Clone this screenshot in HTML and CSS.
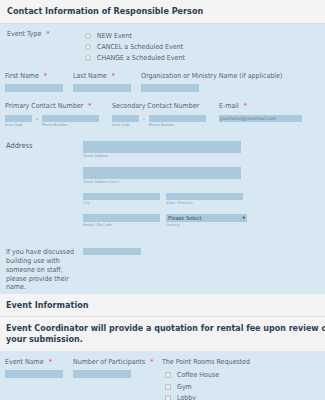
FILE: index.html
```html
<!DOCTYPE html>
<html>
<head>
<meta charset="utf-8">
<link rel="stylesheet" href="styles.css">
</head>
<body>
<div class="page">
  <div class="sec-head"><h2 class="title">Contact Information of Responsible Person</h2></div>
  <div class="blue sec1">
    <div class="row-type">
      <div class="lbl lbl-type">Event Type<span class="req">*</span></div>
      <div class="radios">
        <div class="opt"><span class="radio"></span>NEW Event</div>
        <div class="opt"><span class="radio"></span>CANCEL a Scheduled Event</div>
        <div class="opt"><span class="radio"></span>CHANGE a Scheduled Event</div>
      </div>
    </div>
    <div class="row-names">
      <div class="field"><div class="lbl">First Name<span class="req">*</span></div><div class="inp inp-name"></div></div>
      <div class="field"><div class="lbl">Last Name<span class="req">*</span></div><div class="inp inp-name"></div></div>
      <div class="field"><div class="lbl">Organization or Ministry Name (if applicable)</div><div class="inp inp-name"></div></div>
    </div>
    <div class="row-contact">
      <div class="field f-phone">
        <div class="lbl">Primary Contact Number<span class="req">*</span></div>
        <div class="phone">
          <div class="subf"><div class="inp inp-area"></div><div class="sub">Area Code</div></div>
          <span class="dash">-</span>
          <div class="subf"><div class="inp inp-num"></div><div class="sub">Phone Number</div></div>
        </div>
      </div>
      <div class="field f-phone">
        <div class="lbl">Secondary Contact Number</div>
        <div class="phone">
          <div class="subf"><div class="inp inp-area"></div><div class="sub">Area Code</div></div>
          <span class="dash">-</span>
          <div class="subf"><div class="inp inp-num"></div><div class="sub">Phone Number</div></div>
        </div>
      </div>
      <div class="field f-email">
        <div class="lbl">E-mail<span class="req">*</span></div>
        <div class="inp inp-email"><span class="ph">yourname@youremail.com</span></div>
      </div>
    </div>
    <div class="row-addr">
      <div class="lbl lbl-addr">Address</div>
      <div class="addr-fields">
        <div class="afield"><div class="inp inp-street"></div><div class="sub">Street Address</div></div>
        <div class="afield"><div class="inp inp-street"></div><div class="sub">Street Address Line 2</div></div>
        <div class="apair">
          <div class="afield"><div class="inp inp-half"></div><div class="sub">City</div></div>
          <div class="afield"><div class="inp inp-half"></div><div class="sub">State / Province</div></div>
        </div>
        <div class="apair">
          <div class="afield"><div class="inp inp-half"></div><div class="sub">Postal / Zip Code</div></div>
          <div class="afield"><div class="inp inp-select"><span class="sel-text">Please Select</span><span class="sel-arrow">&#9660;</span></div><div class="sub">Country</div></div>
        </div>
      </div>
    </div>
    <div class="row-staff">
      <div class="lbl lbl-staff">If you have discussed building use with someone on staff, please provide their name.</div>
      <div class="inp inp-staff"></div>
    </div>
  </div>
  <div class="gray">
    <div class="sub-head"><h3 class="title2">Event Information</h3></div>
    <p class="notice">Event Coordinator will provide a quotation for rental fee upon review of your submission.</p>
  </div>
  <div class="blue sec2">
    <div class="field"><div class="lbl">Event Name<span class="req">*</span></div><div class="inp inp-name"></div></div>
    <div class="field"><div class="lbl">Number of Participants<span class="req">*</span></div><div class="inp inp-name"></div></div>
    <div class="field f-rooms">
      <div class="lbl">The Point Rooms Requested</div>
      <div class="checks">
        <div class="opt opt-c"><span class="check"></span>Coffee House</div>
        <div class="opt opt-c"><span class="check"></span>Gym</div>
        <div class="opt opt-c"><span class="check"></span>Lobby</div>
      </div>
    </div>
  </div>
</div>
</body>
</html>
```
FILE: styles.css
```css
html, body {
  margin: 0;
  padding: 0;
  overflow: hidden;
  background: #d8e8f2;
}
.page {
  width: 325px;
  height: 400px;
  overflow: hidden;
  font-family: "DejaVu Sans Condensed", "DejaVu Sans", sans-serif;
  font-stretch: condensed;
  color: #56636f;
}
.sec-head {
  height: 23px;
  background: #f4f4f4;
  border-bottom: 1px solid #d9dde0;
}
.title {
  margin: 0;
  padding-left: 7px;
  font-size: 9px;
  line-height: 23px;
  font-weight: bold;
  color: #2d3f52;
}
.blue {
  background: #d8e8f2;
}
.sec1 {
  padding: 6px 0 2px 0;
}
.lbl {
  font-size: 7px;
  line-height: 10px;
  white-space: nowrap;
  color: #56636f;
}
.req {
  color: #ee3a3a;
  margin-left: 5px;
}
.row-type {
  display: flex;
}
.lbl-type {
  width: 78px;
  padding-left: 7px;
  line-height: 9px;
}
.radios {
  display: flex;
  flex-direction: column;
}
.opt {
  display: flex;
  align-items: center;
  height: 11.3px;
  font-size: 7px;
  color: #56636f;
}
.radio {
  width: 4px;
  height: 4px;
  border-radius: 50%;
  border: 0.7px solid #b8c0c6;
  background: #e6eaed;
  margin-right: 6px;
}
.row-names {
  display: flex;
  gap: 10px;
  padding-left: 5px;
  margin-top: 6.7px;
}
.field {
  width: 58px;
}
.inp {
  background: #abc9dc;
}
.inp-name {
  margin-top: 3.3px;
  height: 8px;
  width: 58px;
}
.row-contact {
  display: flex;
  padding-left: 5px;
  margin-top: 9.5px;
}
.f-phone {
  width: 94px;
  margin-right: 13px;
}
.f-email {
  width: 83px;
}
.phone {
  display: flex;
  margin-top: 3.5px;
}
.dash {
  width: 10px;
  text-align: center;
  font-size: 7px;
  line-height: 8px;
  color: #56636f;
}
.inp-area {
  width: 27px;
  height: 7.5px;
}
.inp-num {
  width: 57px;
  height: 7.5px;
}
.inp-email {
  margin-top: 3.5px;
  width: 83px;
  height: 7.5px;
  display: flex;
  align-items: center;
}
.ph {
  font-size: 4.6px;
  color: #6b7780;
  padding-left: 1px;
  white-space: nowrap;
}
.sub {
  font-size: 3.8px;
  line-height: 5px;
  color: #8e9ba5;
  white-space: nowrap;
}
.row-addr {
  display: flex;
  margin-top: 13.5px;
}
.lbl-addr {
  width: 77px;
  padding-left: 6px;
  font-size: 7.4px;
  color: #4d5b68;
}
.addr-fields {
  display: flex;
  flex-direction: column;
}
.afield {
  margin-bottom: 8.7px;
}
.inp-street {
  width: 158px;
  height: 12.3px;
}
.apair {
  display: flex;
  gap: 6px;
}
.inp-half {
  width: 77px;
  height: 7.6px;
}
.inp-select {
  width: 81px;
  height: 7.6px;
  display: flex;
  align-items: center;
  justify-content: space-between;
}
.sel-text {
  font-size: 5.6px;
  color: #3a4652;
  padding-left: 2px;
}
.sel-arrow {
  font-size: 3.6px;
  color: #3a4652;
  padding-right: 2px;
}
.row-staff {
  display: flex;
  margin-top: 12.8px;
}
.lbl-staff {
  width: 72px;
  padding: 0 5px 0 6px;
  white-space: normal;
  line-height: 8.8px;
}
.inp-staff {
  width: 58px;
  height: 7px;
  margin-top: 0;
}
.gray {
  background: #f4f4f4;
  height: 57.3px;
}
.sub-head {
  height: 22px;
  border-bottom: 1px solid #e0e2e4;
}
.title2 {
  margin: 0;
  padding-left: 6px;
  font-size: 9px;
  line-height: 23px;
  font-weight: bold;
  color: #2d3f52;
}
.notice {
  margin: 0;
  padding: 6px 0 0 6px;
  width: 345px;
  font-size: 8.9px;
  line-height: 11px;
  font-weight: bold;
  color: #2d3f52;
}
.sec2 {
  display: flex;
  gap: 10px;
  padding: 5.7px 0 0 5px;
  height: 50px;
}
.f-rooms {
  margin-left: 21px;
  width: 140px;
}
.checks {
  margin-top: 2px;
  padding-left: 3px;
}
.opt-c {
  height: 11.7px;
}
.check {
  width: 4px;
  height: 4px;
  border: 0.7px solid #b8c0c6;
  background: #e6eaed;
  border-radius: 1px;
  margin-right: 6px;
}
```
